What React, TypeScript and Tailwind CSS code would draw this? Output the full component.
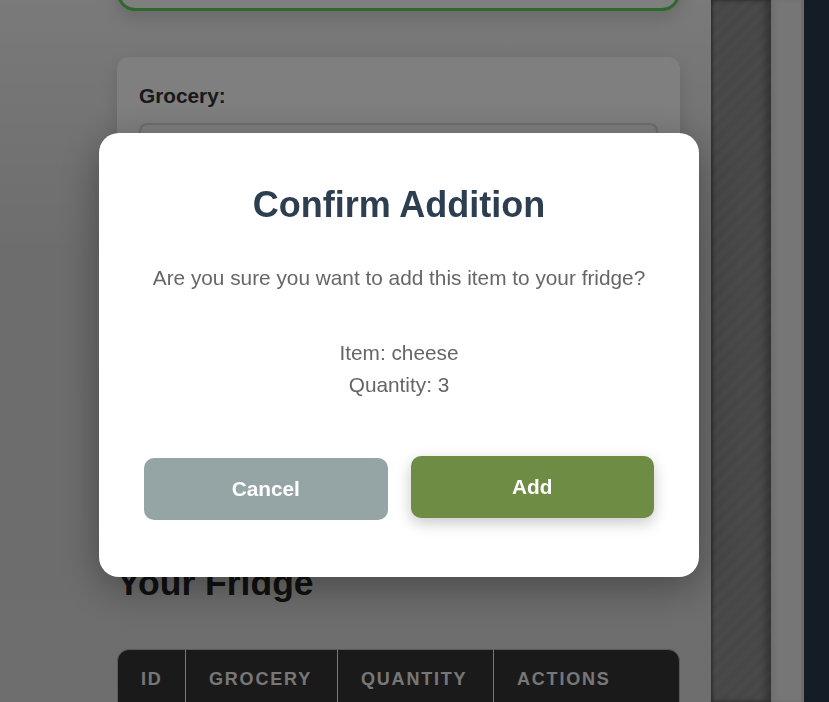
import React from "react";

const font = "font-['Liberation_Sans',Arial,Helvetica,sans-serif]";

const FridgeHeader = () => {
    const cols = ["ID", "Grocery", "Quantity", "Actions"];
    return (
        <div className="mt-[46px] rounded-t-xl border border-[#b4b4b4] bg-[#343434] overflow-hidden">
            <div className="grid grid-cols-[68px_152px_156px_1fr]">
                {cols.map((c, i) => (
                    <div
                        key={c}
                        className={`px-[23px] pt-[19px] pb-[20px] text-[18px] leading-[21px] font-bold uppercase tracking-[0.1em] text-[#eeeeee] ${
                            i < cols.length - 1 ? "border-r border-[#f0f0f0]" : ""
                        }`}
                    >
                        {c}
                    </div>
                ))}
            </div>
        </div>
    );
};

const ConfirmModal = () => {
    return (
        <div className="fixed inset-0 bg-black/50 flex items-start pl-[99px] pt-[133px]">
            <div className="w-[600px] rounded-[20px] bg-white px-[45px] pt-[50px] pb-[57px] text-center shadow-[0_10px_40px_rgba(0,0,0,0.35)]">
                <h2 className="text-[36px] leading-[44px] font-bold text-[#2c3e50]">Confirm Addition</h2>
                <p className="mt-[36px] text-[20.8px] leading-[30px] text-[#666666]">
                    Are you sure you want to add this item to your fridge?
                </p>
                <div className="mt-[44px] text-[20.8px] leading-[32px] text-[#666666]">
                    <p>Item: cheese</p>
                    <p>Quantity: 3</p>
                </div>
                <div className="mt-[57px] flex gap-[23px]">
                    <button className="flex-1 h-[62px] rounded-[10px] bg-[#95a5a6] text-[20.8px] font-bold text-white">
                        Cancel
                    </button>
                    <button className="flex-1 h-[62px] rounded-[10px] bg-[#6f8c45] text-[20.8px] font-bold text-white -translate-y-[2px] shadow-[0_5px_15px_rgba(0,0,0,0.22)]">
                        Add
                    </button>
                </div>
            </div>
        </div>
    );
};

const App = () => {
    return (
        <div className={`${font} h-screen overflow-hidden flex`}>
            <div className="w-[711px] shrink-0 pl-[117px] pr-[31px] bg-[linear-gradient(to_bottom,#f4f4f4_0px,#dadada_260px,#dcdcdc_100%)]">
                <div className="-mt-[80px] h-[91px] rounded-[18px] border-[3px] border-[#5ad25a] bg-white shadow-[0_6px_18px_rgba(0,0,0,0.15)]" />
                <div className="mt-[46px] h-[466px] rounded-xl bg-white px-[22px] pt-[23px] shadow-[0_6px_18px_rgba(0,0,0,0.12)] overflow-hidden">
                    <label className="block text-[20.8px] font-bold text-[#333]">Grocery:</label>
                    <div className="mt-3 h-[60px] rounded-lg border-2 border-[#dddddd]" />
                    <label className="mt-6 block text-[20.8px] font-bold text-[#333]">Quantity:</label>
                    <div className="mt-3 h-[60px] rounded-lg border-2 border-[#dddddd]" />
                    <div className="mt-8 h-[60px] rounded-lg bg-[#6f8c45]" />
                </div>
                <h1 className="mt-[40px] text-[35.5px] leading-[40px] font-bold text-[#222]">Your Fridge</h1>
                <FridgeHeader />
            </div>
            <div className="w-[60px] shrink-0 bg-[repeating-linear-gradient(135deg,#8e8e8e_0px,#8e8e8e_5px,#939393_5px,#939393_10px)] shadow-[inset_2px_0_3px_rgba(0,0,0,0.35),inset_-6px_0_6px_rgba(0,0,0,0.25)]" />
            <div className="w-[33px] shrink-0 flex bg-[#ececec] shadow-[inset_3px_0_4px_rgba(0,0,0,0.08)]">
                <div className="flex-1" />
                <div className="w-[3px] bg-[#d6d6d6]" />
            </div>
            <div className="flex-1 bg-[#28384c]" />
            <ConfirmModal />
        </div>
    );
};

export default App;
